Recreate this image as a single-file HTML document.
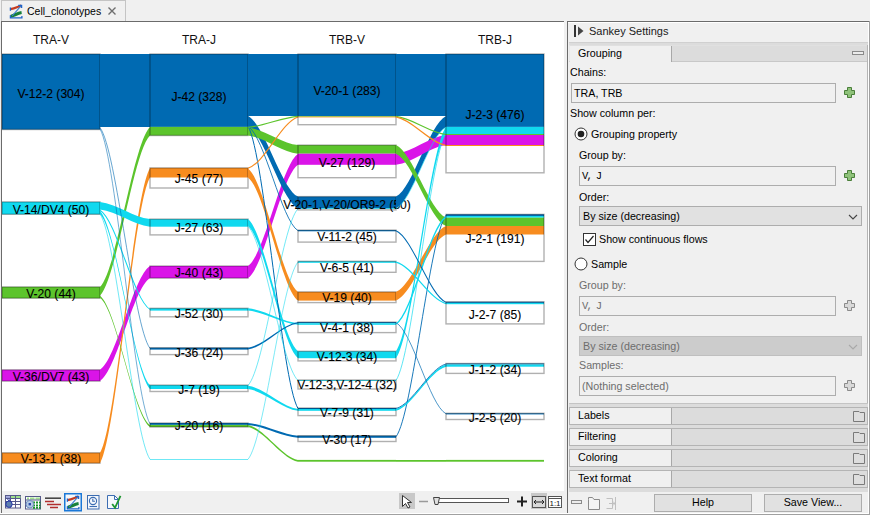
<!DOCTYPE html>
<html><head><meta charset="utf-8">
<style>
*{margin:0;padding:0;box-sizing:border-box}
html,body{width:870px;height:515px;overflow:hidden;background:#f0f0f0;font-family:"Liberation Sans",sans-serif;color:#000}
.abs{position:absolute}
.t{position:absolute;font-size:10.7px;white-space:nowrap;line-height:13px}
.field{position:absolute;background:#f0f0f0;border:1px solid #adadad}
.hdr{position:absolute;left:569px;width:299px;height:18px;background:#dcdcdc;border:1px solid #b4b4b4}
.hdr .tab{position:absolute;left:0;top:0;width:102px;height:16px;background:#f0f0f0;border-right:1px solid #a8a8a8}
.hdr .lab{position:absolute;left:8px;top:1px;font-size:10.7px;line-height:13px}
.gap{position:absolute;left:569px;width:299px;height:4px;background:#dcdcdc}
.fold{position:absolute;left:283px;top:3px;width:12px;height:11px}
.plus{position:absolute;width:11px;height:11px}
.btn{position:absolute;background:#e1e1e1;border:1px solid #adadad;font-size:10.7px;text-align:center;line-height:15px}
</style></head><body>
<!-- tab bar -->
<div class="abs" style="left:0;top:0;width:870px;height:21px;background:#f0f0f0"></div>
<div class="abs" style="left:1px;top:0px;width:125px;height:22px;background:#f0f0f0;border:1px solid #c4c4c4;border-bottom:none"></div>
<svg class="abs" style="left:9px;top:4px" width="15" height="15" viewBox="0 0 15 15">
 <path d="M1.5 5.2 C5 4.8 8.5 3 12.3 1.6" stroke="#c43c22" stroke-width="2.2" fill="none"/>
 <path d="M1.6 12.4 C5 11.6 8.5 9.2 12.6 8.6" stroke="#17803a" stroke-width="3" fill="none"/>
 <path d="M11.8 2.2 L3.2 11.8" stroke="#3b7fd0" stroke-width="1.1" fill="none"/>
 <path d="M1.4 3.6 V6.8 M1.4 11.2 V13.9 H12.9 V12 M9.2 1.3 H12.6 V4" stroke="#1f63c8" stroke-width="1.3" fill="none"/>
</svg>
<div class="t" style="left:27px;top:5px;font-size:10.5px;color:#000">Cell_clonotypes</div>
<svg class="abs" style="left:107px;top:6px" width="10" height="10" viewBox="0 0 10 10"><path d="M1.5 1.5L8.5 8.5M8.5 1.5L1.5 8.5" stroke="#6e6e6e" stroke-width="1.4"/></svg>

<!-- left panel -->

<svg width="564" height="470" viewBox="0 21 564 470" style="position:absolute;left:0;top:21px">
<rect x="0" y="21" width="2" height="470" fill="#f0f0f0"/><rect x="2" y="22" width="562" height="469" fill="#fff"/>
<g font-family="Liberation Sans, sans-serif"><rect x="2" y="54" width="98" height="75.50" fill="#006ab2"/><rect x="2" y="54" width="98" height="75.50" fill="none" stroke="rgba(0,0,0,0.31)" stroke-width="1.4"/><rect x="2" y="201.9" width="98" height="12.40" fill="#10d9ef"/><rect x="2" y="201.9" width="98" height="12.40" fill="none" stroke="rgba(0,0,0,0.31)" stroke-width="1.4"/><rect x="2" y="286.9" width="98" height="11.30" fill="#5cc42c"/><rect x="2" y="286.9" width="98" height="11.30" fill="none" stroke="rgba(0,0,0,0.31)" stroke-width="1.4"/><rect x="2" y="369.8" width="98" height="11.30" fill="#da14e8"/><rect x="2" y="369.8" width="98" height="11.30" fill="none" stroke="rgba(0,0,0,0.31)" stroke-width="1.4"/><rect x="2" y="452.8" width="98" height="10.40" fill="#f78c1f"/><rect x="2" y="452.8" width="98" height="10.40" fill="none" stroke="rgba(0,0,0,0.31)" stroke-width="1.4"/><text x="51.0" y="98.0" text-anchor="middle" font-size="12.1" fill="#000" stroke="#000" stroke-width="0.1">V-12-2 (304)</text><text x="51.0" y="213.9" text-anchor="middle" font-size="12.1" fill="#000" stroke="#000" stroke-width="0.1">V-14/DV4 (50)</text><text x="51.0" y="297.7" text-anchor="middle" font-size="12.1" fill="#000" stroke="#000" stroke-width="0.1">V-20 (44)</text><text x="51.0" y="380.6" text-anchor="middle" font-size="12.1" fill="#000" stroke="#000" stroke-width="0.1">V-36/DV7 (43)</text><text x="51.0" y="462.7" text-anchor="middle" font-size="12.1" fill="#000" stroke="#000" stroke-width="0.1">V-13-1 (38)</text><path d="M100 54C116.67 54.00 133.33 54.00 150 54L150 126.9C133.33 126.90 116.67 126.90 100 126.9Z" fill="#006ab2" opacity="1"/><path d="M100 369.8C116.67 359.42 133.33 276.38 150 266L150 278.1C133.33 288.40 116.67 370.80 100 381.1Z" fill="#da14e8" opacity="1"/><path d="M100 452.8C116.67 424.31 133.33 196.39 150 167.9L150 177.5C133.33 206.07 116.67 434.63 100 463.2Z" fill="#f78c1f" opacity="1"/><path d="M100 286.9C116.67 270.90 133.33 142.90 150 126.9L150 135.5C133.33 151.51 116.67 279.59 100 295.6Z" fill="#5cc42c" opacity="1"/><path d="M100 201.9C116.67 203.62 133.33 217.38 150 219.1L150 226.7C133.33 224.99 116.67 211.31 100 209.6Z" fill="#10d9ef" opacity="1"/><path d="M100 211.0C116.67 228.41 133.33 367.69 150 385.1L150 389C133.33 371.50 116.67 231.50 100 214.0Z" fill="#10d9ef" opacity="1"/><path d="M100 295.8C116.67 308.71 133.33 411.99 150 424.9L150 427C133.33 414.08 116.67 310.72 100 297.8Z" fill="#5cc42c" opacity="1"/><path d="M100 210.2C116.67 220.12 133.33 299.48 150 309.4" fill="none" stroke="#10d9ef" stroke-width="1.02"/><path d="M100 127.6C116.67 149.68 133.33 326.28 150 348.35" fill="none" stroke="#006ab2" stroke-width="0.60"/><path d="M100 213.95C116.67 238.48 133.33 434.76 150 459.3" fill="none" stroke="#10d9ef" stroke-width="0.60"/><path d="M100 128.89999999999998C116.67 158.39 133.33 394.36 150 423.85" fill="none" stroke="#006ab2" stroke-width="0.55"/><rect x="150" y="54" width="98" height="72.90" fill="#006ab2"/><rect x="150" y="126.9" width="98" height="8.60" fill="#5cc42c"/><rect x="150" y="54" width="98" height="81.50" fill="none" stroke="rgba(0,0,0,0.31)" stroke-width="1.4"/><rect x="150" y="167.9" width="98" height="9.60" fill="#f78c1f"/><rect x="150" y="167.9" width="98" height="20.10" fill="none" stroke="rgba(0,0,0,0.31)" stroke-width="1.4"/><rect x="150" y="219.1" width="98" height="7.60" fill="#10d9ef"/><rect x="150" y="219.1" width="98" height="15.80" fill="none" stroke="rgba(0,0,0,0.31)" stroke-width="1.4"/><rect x="150" y="266" width="98" height="12.10" fill="#da14e8"/><rect x="150" y="266" width="98" height="12.10" fill="none" stroke="rgba(0,0,0,0.31)" stroke-width="1.4"/><rect x="150" y="308.3" width="98" height="2.30" fill="#10d9ef"/><rect x="150" y="308.3" width="98" height="8.50" fill="none" stroke="rgba(0,0,0,0.31)" stroke-width="1.4"/><rect x="150" y="347.7" width="98" height="1.90" fill="#006ab2"/><rect x="150" y="347.7" width="98" height="6.90" fill="none" stroke="rgba(0,0,0,0.31)" stroke-width="1.4"/><rect x="150" y="385.1" width="98" height="3.90" fill="#10d9ef"/><rect x="150" y="385.1" width="98" height="6.40" fill="none" stroke="rgba(0,0,0,0.31)" stroke-width="1.4"/><rect x="150" y="423" width="98" height="1.90" fill="#006ab2"/><rect x="150" y="424.9" width="98" height="2.10" fill="#5cc42c"/><rect x="150" y="423" width="98" height="4.00" fill="none" stroke="rgba(0,0,0,0.31)" stroke-width="1.4"/><text x="199.0" y="100.8" text-anchor="middle" font-size="12.1" fill="#000" stroke="#000" stroke-width="0.1">J-42 (328)</text><text x="199.0" y="182.8" text-anchor="middle" font-size="12.1" fill="#000" stroke="#000" stroke-width="0.1">J-45 (77)</text><text x="199.0" y="231.8" text-anchor="middle" font-size="12.1" fill="#000" stroke="#000" stroke-width="0.1">J-27 (63)</text><text x="199.0" y="276.9" text-anchor="middle" font-size="12.1" fill="#000" stroke="#000" stroke-width="0.1">J-40 (43)</text><text x="199.0" y="317.7" text-anchor="middle" font-size="12.1" fill="#000" stroke="#000" stroke-width="0.1">J-52 (30)</text><text x="199.0" y="356.7" text-anchor="middle" font-size="12.1" fill="#000" stroke="#000" stroke-width="0.1">J-36 (24)</text><text x="199.0" y="393.6" text-anchor="middle" font-size="12.1" fill="#000" stroke="#000" stroke-width="0.1">J-7 (19)</text><text x="199.0" y="429.7" text-anchor="middle" font-size="12.1" fill="#000" stroke="#000" stroke-width="0.1">J-20 (16)</text><rect x="150" y="459" width="98" height="0.6000000000000227" fill="#10d9ef"/><path d="M248 54C264.67 54.00 281.33 54.00 298 54L298 116C281.33 116.00 264.67 116.00 248 116Z" fill="#006ab2" opacity="1"/><path d="M248 266C264.67 254.77 281.33 164.93 298 153.7L298 164.8C281.33 176.13 264.67 266.77 248 278.1Z" fill="#da14e8" opacity="1"/><path d="M248 116C264.67 124.06 281.33 188.54 298 196.6L298 208.3C281.33 200.12 264.67 134.68 248 126.5Z" fill="#006ab2" opacity="1"/><path d="M248 168.6C264.67 180.93 281.33 279.57 298 291.9L298 300.6C281.33 288.29 264.67 189.81 248 177.5Z" fill="#f78c1f" opacity="1"/><path d="M248 127.6C264.67 129.35 281.33 143.35 298 145.1L298 153.7C281.33 151.88 264.67 137.32 248 135.5Z" fill="#5cc42c" opacity="1"/><path d="M248 219.1C264.67 232.32 281.33 338.08 298 351.3L298 358.2C281.33 344.98 264.67 239.22 248 226.0Z" fill="#10d9ef" opacity="1"/><path d="M248 385.8C264.67 388.12 281.33 406.68 298 409L298 410.8C281.33 408.62 264.67 391.18 248 389Z" fill="#10d9ef" opacity="1"/><path d="M248 308.3C264.67 309.79 281.33 321.71 298 323.2L298 324.8C281.33 323.38 264.67 312.02 248 310.6Z" fill="#10d9ef" opacity="1"/><path d="M248 424.9C264.67 428.40 281.33 456.40 298 459.9L298 461.7C281.33 458.23 264.67 430.47 248 427Z" fill="#5cc42c" opacity="1"/><path d="M248 347.7C264.67 345.14 281.33 324.66 298 322.1L298 323.2C281.33 325.84 264.67 346.96 248 349.6Z" fill="#006ab2" opacity="1"/><path d="M248 423C264.67 424.27 281.33 434.43 298 435.7L298 437.8C281.33 436.51 264.67 426.19 248 424.9Z" fill="#006ab2" opacity="1"/><path d="M248 126.3C264.67 136.74 281.33 220.26 298 230.7" fill="none" stroke="#006ab2" stroke-width="0.85"/><path d="M248 126.3C264.67 154.52 281.33 380.28 298 408.5" fill="none" stroke="#006ab2" stroke-width="1.00"/><path d="M248 127.25C264.67 126.16 281.33 117.44 298 116.35" fill="none" stroke="#5cc42c" stroke-width="1.10"/><path d="M248 168.25C264.67 163.13 281.33 122.17 298 117.05000000000001" fill="none" stroke="#f78c1f" stroke-width="1.10"/><path d="M248 226.35C264.67 241.75 281.33 365.00 298 380.4" fill="none" stroke="#10d9ef" stroke-width="0.59"/><path d="M248 385.45000000000005C264.67 367.77 281.33 226.33 298 208.65" fill="none" stroke="#10d9ef" stroke-width="0.59"/><path d="M248 459.3C264.67 439.57 281.33 281.77 298 262.05" fill="none" stroke="#10d9ef" stroke-width="0.55"/><rect x="298" y="54" width="98" height="62.00" fill="#006ab2"/><rect x="298" y="116" width="98" height="0.70" fill="#5cc42c"/><rect x="298" y="116.7" width="98" height="0.70" fill="#f78c1f"/><rect x="298" y="54" width="98" height="70.70" fill="none" stroke="rgba(0,0,0,0.31)" stroke-width="1.4"/><rect x="298" y="145.1" width="98" height="8.60" fill="#5cc42c"/><rect x="298" y="153.7" width="98" height="11.10" fill="#da14e8"/><rect x="298" y="145.1" width="98" height="32.60" fill="none" stroke="rgba(0,0,0,0.31)" stroke-width="1.4"/><rect x="298" y="196.6" width="98" height="11.70" fill="#006ab2"/><rect x="298" y="208.3" width="98" height="0.70" fill="#10d9ef"/><rect x="298" y="196.6" width="98" height="13.30" fill="none" stroke="rgba(0,0,0,0.31)" stroke-width="1.4"/><rect x="298" y="230.1" width="98" height="1.20" fill="#006ab2"/><rect x="298" y="230.1" width="98" height="12.00" fill="none" stroke="rgba(0,0,0,0.31)" stroke-width="1.4"/><rect x="298" y="261.3" width="98" height="1.50" fill="#10d9ef"/><rect x="298" y="261.3" width="98" height="11.00" fill="none" stroke="rgba(0,0,0,0.31)" stroke-width="1.4"/><rect x="298" y="291.9" width="98" height="8.70" fill="#f78c1f"/><rect x="298" y="291.9" width="98" height="10.70" fill="none" stroke="rgba(0,0,0,0.31)" stroke-width="1.4"/><rect x="298" y="322.1" width="98" height="1.10" fill="#006ab2"/><rect x="298" y="323.2" width="98" height="1.60" fill="#10d9ef"/><rect x="298" y="322.1" width="98" height="10.50" fill="none" stroke="rgba(0,0,0,0.31)" stroke-width="1.4"/><rect x="298" y="351.3" width="98" height="6.90" fill="#10d9ef"/><rect x="298" y="351.3" width="98" height="9.60" fill="none" stroke="rgba(0,0,0,0.31)" stroke-width="1.4"/><rect x="298" y="380" width="98" height="0.80" fill="#10d9ef"/><rect x="298" y="380" width="98" height="9.00" fill="none" stroke="rgba(0,0,0,0.31)" stroke-width="1.4"/><rect x="298" y="408" width="98" height="1.00" fill="#006ab2"/><rect x="298" y="409" width="98" height="1.80" fill="#10d9ef"/><rect x="298" y="408" width="98" height="7.60" fill="none" stroke="rgba(0,0,0,0.31)" stroke-width="1.4"/><rect x="298" y="435.7" width="98" height="2.10" fill="#006ab2"/><rect x="298" y="435.7" width="98" height="5.80" fill="none" stroke="rgba(0,0,0,0.31)" stroke-width="1.4"/><text x="347.0" y="94.8" text-anchor="middle" font-size="12.1" fill="#000" stroke="#000" stroke-width="0.1">V-20-1 (283)</text><text x="347.0" y="166.5" text-anchor="middle" font-size="12.1" fill="#000" stroke="#000" stroke-width="0.1">V-27 (129)</text><text x="347.0" y="208.6" text-anchor="middle" font-size="12.1" fill="#000" stroke="#000" stroke-width="0.1">V-20-1,V-20/OR9-2 (50)</text><text x="347.0" y="240.8" text-anchor="middle" font-size="12.1" fill="#000" stroke="#000" stroke-width="0.1">V-11-2 (45)</text><text x="347.0" y="271.7" text-anchor="middle" font-size="12.1" fill="#000" stroke="#000" stroke-width="0.1">V-6-5 (41)</text><text x="347.0" y="301.6" text-anchor="middle" font-size="12.1" fill="#000" stroke="#000" stroke-width="0.1">V-19 (40)</text><text x="347.0" y="331.7" text-anchor="middle" font-size="12.1" fill="#000" stroke="#000" stroke-width="0.1">V-4-1 (38)</text><text x="347.0" y="360.5" text-anchor="middle" font-size="12.1" fill="#000" stroke="#000" stroke-width="0.1">V-12-3 (34)</text><text x="347.0" y="389.4" text-anchor="middle" font-size="12.1" fill="#000" stroke="#000" stroke-width="0.1">V-12-3,V-12-4 (32)</text><text x="347.0" y="417.4" text-anchor="middle" font-size="12.1" fill="#000" stroke="#000" stroke-width="0.1">V-7-9 (31)</text><text x="347.0" y="443.6" text-anchor="middle" font-size="12.1" fill="#000" stroke="#000" stroke-width="0.1">V-30 (17)</text><rect x="298" y="459.9" width="98" height="1.8000000000000114" fill="#5cc42c"/><path d="M396 54C412.67 54.00 429.33 54.00 446 54L446 116C429.33 116.00 412.67 116.00 396 116Z" fill="#006ab2" opacity="1"/><path d="M396 196.6C412.67 188.54 429.33 124.06 446 116L446 126.9C429.33 135.04 412.67 200.16 396 208.3Z" fill="#006ab2" opacity="1"/><path d="M396 153.7C412.67 151.83 429.33 136.87 446 135L446 145C429.33 146.98 412.67 162.82 396 164.8Z" fill="#da14e8" opacity="1"/><path d="M396 291.9C412.67 285.31 429.33 232.59 446 226L446 234.6C429.33 241.20 412.67 294.00 396 300.6Z" fill="#f78c1f" opacity="1"/><path d="M396 145.1C412.67 152.36 429.33 210.44 446 217.7L446 226C429.33 218.77 412.67 160.93 396 153.7Z" fill="#5cc42c" opacity="1"/><path d="M396 351.3C412.67 328.85 429.33 149.25 446 126.8L446 133.4C429.33 155.88 412.67 335.72 396 358.2Z" fill="#10d9ef" opacity="1"/><path d="M396 436.75C412.67 414.59 429.33 237.31 446 215.15" fill="none" stroke="#006ab2" stroke-width="0.90"/><path d="M396 409C412.67 404.55 429.33 368.95 446 364.5L446 366.7C429.33 371.11 412.67 406.39 396 410.8Z" fill="#10d9ef" opacity="1"/><path d="M396 459.9C412.67 459.90 429.33 459.90 446 459.9L446 461.7C429.33 461.70 412.67 461.70 396 461.7Z" fill="#5cc42c" opacity="1"/><path d="M396 324.0C412.67 313.29 429.33 227.56 446 216.85" fill="none" stroke="#10d9ef" stroke-width="1.36"/><path d="M396 262.05C412.67 266.20 429.33 299.40 446 303.54999999999995" fill="none" stroke="#10d9ef" stroke-width="1.27"/><path d="M396 230.7C412.67 237.86 429.33 295.19 446 302.35" fill="none" stroke="#006ab2" stroke-width="1.02"/><path d="M396 322.65C412.67 331.76 429.33 404.69 446 413.8" fill="none" stroke="#006ab2" stroke-width="0.70"/><path d="M396 408.5C412.67 404.05 429.33 368.45 446 364.0" fill="none" stroke="#006ab2" stroke-width="0.85"/><path d="M396 380.4C412.67 355.72 429.33 158.28 446 133.6" fill="none" stroke="#10d9ef" stroke-width="0.68"/><path d="M396 116.35C412.67 118.16 429.33 132.69 446 134.5" fill="none" stroke="#5cc42c" stroke-width="1.10"/><path d="M396 117.05000000000001C412.67 119.90 429.33 142.66 446 145.5" fill="none" stroke="#f78c1f" stroke-width="1.10"/><path d="M396 208.65C412.67 200.50 429.33 135.30 446 127.15" fill="none" stroke="#10d9ef" stroke-width="0.59"/><rect x="446" y="54" width="98" height="72.90" fill="#006ab2"/><rect x="446" y="126.9" width="98" height="7.10" fill="#10d9ef"/><rect x="446" y="134" width="98" height="1.00" fill="#5cc42c"/><rect x="446" y="135" width="98" height="10.00" fill="#da14e8"/><rect x="446" y="145" width="98" height="1.00" fill="#f78c1f"/><rect x="446" y="54" width="98" height="118.80" fill="none" stroke="rgba(0,0,0,0.31)" stroke-width="1.4"/><rect x="446" y="214.3" width="98" height="1.70" fill="#006ab2"/><rect x="446" y="216" width="98" height="1.70" fill="#10d9ef"/><rect x="446" y="217.7" width="98" height="8.30" fill="#5cc42c"/><rect x="446" y="226" width="98" height="8.50" fill="#f78c1f"/><rect x="446" y="214.4" width="98" height="47.00" fill="none" stroke="rgba(0,0,0,0.31)" stroke-width="1.4"/><rect x="446" y="301.8" width="98" height="1.10" fill="#006ab2"/><rect x="446" y="302.9" width="98" height="1.30" fill="#10d9ef"/><rect x="446" y="301.8" width="98" height="22.10" fill="none" stroke="rgba(0,0,0,0.31)" stroke-width="1.4"/><rect x="446" y="363.5" width="98" height="1.00" fill="#006ab2"/><rect x="446" y="364.5" width="98" height="2.20" fill="#10d9ef"/><rect x="446" y="363.5" width="98" height="9.90" fill="none" stroke="rgba(0,0,0,0.31)" stroke-width="1.4"/><rect x="446" y="413.3" width="98" height="1.10" fill="#006ab2"/><rect x="446" y="413.3" width="98" height="6.20" fill="none" stroke="rgba(0,0,0,0.31)" stroke-width="1.4"/><text x="495.0" y="118.7" text-anchor="middle" font-size="12.1" fill="#000" stroke="#000" stroke-width="0.1">J-2-3 (476)</text><text x="495.0" y="242.7" text-anchor="middle" font-size="12.1" fill="#000" stroke="#000" stroke-width="0.1">J-2-1 (191)</text><text x="495.0" y="318.7" text-anchor="middle" font-size="12.1" fill="#000" stroke="#000" stroke-width="0.1">J-2-7 (85)</text><text x="495.0" y="373.6" text-anchor="middle" font-size="12.1" fill="#000" stroke="#000" stroke-width="0.1">J-1-2 (34)</text><text x="495.0" y="421.6" text-anchor="middle" font-size="12.1" fill="#000" stroke="#000" stroke-width="0.1">J-2-5 (20)</text><rect x="446" y="459.9" width="98" height="1.8000000000000114" fill="#5cc42c"/></g>
<g font-family="Liberation Sans, sans-serif" font-size="12" fill="#111"><text x="51.0" y="43.6" font-size="12" text-anchor="middle">TRA-V</text><text x="199.0" y="43.6" font-size="12" text-anchor="middle">TRA-J</text><text x="347.0" y="43.6" font-size="12" text-anchor="middle">TRB-V</text><text x="495.0" y="43.6" font-size="12" text-anchor="middle">TRB-J</text></g>
</svg>
<div class="abs" style="left:1px;top:21px;width:563px;height:1px;background:#6b6b6b"></div>
<div class="abs" style="left:567px;top:21px;width:302px;height:1px;background:#6b6b6b"></div>
<div class="abs" style="left:568px;top:22px;width:300px;height:1px;background:#fff"></div>
<div class="abs" style="left:1px;top:21px;width:1px;height:492px;background:#6b6b6b"></div>
<div class="abs" style="left:564px;top:21px;width:3px;height:492px;background:#f0f0f0"></div>
<div class="abs" style="left:567px;top:21px;width:1px;height:492px;background:#6b6b6b"></div>
<!-- bottom toolbar -->
<div class="abs" style="left:2px;top:491px;width:565px;height:22px;background:#f0f0f0"></div>
<div class="abs" style="left:0;top:513px;width:870px;height:1px;background:#fff"></div>
<div class="abs" style="left:0;top:514px;width:870px;height:1px;background:#a0a0a0"></div>
<svg class="abs" style="left:0;top:491px" width="567" height="22" viewBox="0 0 567 22">
 <g transform="translate(5,4)">
  <rect x="0.5" y="0.5" width="15" height="12.5" fill="#fff" stroke="#56598a"/>
  <rect x="6" y="1" width="4" height="2.5" fill="#9fe08c"/><rect x="11" y="1" width="4.5" height="2.5" fill="#9fe08c"/>
  <path d="M5.5 1V13M10.5 1V13M1 3.5H15.5M1 6.5H15.5M1 9.5H15.5" stroke="#56598a" stroke-width="1"/>
  <path d="M2 1.2V3.2M4 1.2V3.2M2.5 4L4 6L5 4.2" stroke="#2a3aa8" stroke-width="1" fill="none"/>
  <circle cx="4" cy="9.2" r="3.2" fill="#5f7fae" stroke="#2636a8" stroke-width="1"/>
 </g>
 <g transform="translate(25,5)">
  <rect x="0.5" y="0.5" width="15" height="12.5" fill="#fff" stroke="#56598a"/>
  <rect x="2" y="1.5" width="2" height="2" fill="#9fe08c"/><rect x="5" y="1.5" width="4.5" height="2" fill="#9fe08c"/><rect x="10.5" y="1.5" width="4.5" height="2" fill="#9fe08c"/>
  <path d="M1 4H15.5" stroke="#56598a"/>
  <path d="M8 5.5h2v2h-2zM11 5.5h2v2h-2zM14 5.5h1.5v2h-1.5zM8 8.5h2v2h-2zM11 8.5h2v2h-2zM14 8.5h1.5v2h-1.5zM8 11h2v1.8h-2zM11 11h2v1.8h-2zM14 11h1.5v1.8h-1.5z" fill="#17932a"/>
  <circle cx="4.8" cy="8.2" r="3.8" fill="#b4c8e4" stroke="#6f8fc0" stroke-width="1"/>
  <rect x="3.6" y="7" width="2.4" height="2.4" fill="#2a4aa8"/>
 </g>
 <g transform="translate(45,6)">
  <path d="M0 1.2H16" stroke="#454545" stroke-width="1.6"/>
  <path d="M0 4.5H9M2 7.5H16M5 10.5H13" stroke="#b12e2e" stroke-width="1.6"/>
 </g>
 <rect x="64.75" y="2.75" width="16.5" height="17" fill="#f3f7fb" stroke="#1a78d8" stroke-width="1.5"/>
 <g transform="translate(66,4)">
  <path d="M1.5 5.2 C5 4.8 8.5 3 12.3 1.6" stroke="#c43c22" stroke-width="2.2" fill="none"/>
  <path d="M1.6 12.4 C5 11.6 8.5 9.2 12.6 8.6" stroke="#17803a" stroke-width="3" fill="none"/>
  <path d="M11.8 2.2 L3.2 11.8" stroke="#3b7fd0" stroke-width="1.1" fill="none"/>
  <path d="M1.4 3.6 V6.8 M1.4 11.2 V13.9 H12.9 V12 M9.2 1.3 H12.6 V4" stroke="#1f63c8" stroke-width="1.3" fill="none"/>
 </g>
 <g transform="translate(87,4)">
  <rect x="0.5" y="0.5" width="11.5" height="13.5" fill="#f5f8fc" stroke="#3c6db2"/>
  <circle cx="6" cy="6" r="3.6" fill="none" stroke="#3c6db2" stroke-width="1.1"/>
  <path d="M5.8 3.8V6.3H8" stroke="#3c6db2" stroke-width="1.1" fill="none"/>
  <path d="M2.5 11.5H10" stroke="#3c6db2" stroke-width="1.1"/>
 </g>
 <g transform="translate(107,4)">
  <path d="M0.5 0.5H7.5L11.5 4.5V13.5H0.5Z" fill="#f5f8fc" stroke="#3c6db2"/>
  <path d="M7.5 0.5V4.5H11.5" fill="none" stroke="#3c6db2"/>
  <path d="M5.2 9L8 12.8L13.5 0.8" stroke="#1e9630" stroke-width="1.8" fill="none"/>
 </g>
 <!-- right tools -->
 <rect x="399" y="2" width="16" height="16" fill="#c8c8c8"/>
 <path d="M402.5 4.5V15.5L405.5 12.5L408 17L410 16L407.5 11.5H411.5Z" fill="#fff" stroke="#333" stroke-width="1"/>
 <path d="M419 10.5H428" stroke="#9a9a9a" stroke-width="1.5"/>
 <rect x="437.5" y="7.5" width="71" height="4" fill="#fff" stroke="#555"/>
 <path d="M433.5 6.5H439.5L438 13.5H435Z" fill="#e0e0e0" stroke="#444"/>
 <path d="M517 10.5H527M522 5.5V15.5" stroke="#222" stroke-width="2"/>
 <rect x="531" y="2" width="16" height="16" fill="#c8c8c8"/>
 <rect x="532.5" y="5.5" width="13" height="11" fill="#d9d9d9" stroke="#555"/>
 <path d="M534 11H544M534 11L536 9M534 11L536 13M544 11L542 9M544 11L542 13" stroke="#222" stroke-width="1" stroke-dasharray="none"/>
 <rect x="548.5" y="5.5" width="13" height="11" fill="#fff" stroke="#555"/>
 <path d="M548.5 7.5H561.5" stroke="#555"/>
 <text x="555" y="15" font-size="8" text-anchor="middle" font-family="Liberation Sans" fill="#111">1:1</text>
</svg>
<!-- right panel -->
<div class="abs" style="left:868px;top:22px;width:1px;height:492px;background:#fff"></div>
<div class="abs" style="left:869px;top:21px;width:1px;height:494px;background:#a0a0a0"></div>
<svg class="abs" style="left:573px;top:25px" width="12" height="13" viewBox="0 0 12 13"><rect x="1" y="0" width="2" height="12" fill="#333"/><path d="M5 1.5L10.5 6L5 10.5Z" fill="#444"/></svg>
<div class="t" style="left:589px;top:25px;font-size:11px;color:#1a1a1a">Sankey Settings</div>
<div class="gap" style="top:42px;height:4px;border-top:1px solid #d0d0d0"></div>
<div class="hdr" style="top:45px;height:17px;border-color:#e0e0e0 #d0d0d0 #c8c8c8 #e8e8e8"><div class="tab"></div><div class="lab">Grouping</div>
 <div class="abs" style="right:3px;top:5px;width:12px;height:4px;border:1px solid #8a8a8a;background:#ececec"></div></div>
<div class="t" style="left:570px;top:66px">Chains:</div>
<div class="field" style="left:571px;top:83px;width:265px;height:20px"></div>
<div class="t" style="left:574px;top:87px">TRA, TRB</div>
<svg class="plus" style="left:844px;top:87px" viewBox="0 0 11 11"><path d="M3.5 0.5H7.5V3.5H10.5V7.5H7.5V10.5H3.5V7.5H0.5V3.5H3.5Z" fill="#8fc27a" stroke="#4a7f3a"/></svg>
<div class="t" style="left:570px;top:107px">Show column per:</div>
<svg class="abs" style="left:574px;top:127px" width="14" height="14" viewBox="0 0 14 14"><circle cx="7" cy="7" r="6" fill="#fff" stroke="#333"/><circle cx="7" cy="7" r="3.3" fill="#222"/></svg>
<div class="t" style="left:591px;top:128px">Grouping property</div>
<div class="t" style="left:579px;top:149px">Group by:</div>
<div class="field" style="left:579px;top:166px;width:257px;height:20px"></div>
<div class="t" style="left:582px;top:170px;font-family:'Liberation Mono',monospace;font-size:10.5px;letter-spacing:-1.7px">V, J</div>
<svg class="plus" style="left:844px;top:170px" viewBox="0 0 11 11"><path d="M3.5 0.5H7.5V3.5H10.5V7.5H7.5V10.5H3.5V7.5H0.5V3.5H3.5Z" fill="#8fc27a" stroke="#4a7f3a"/></svg>
<div class="t" style="left:579px;top:191px">Order:</div>
<div class="field" style="left:579px;top:206px;width:283px;height:20px;background:#e1e1e1"></div>
<div class="t" style="left:583px;top:210px">By size (decreasing)</div>
<svg class="abs" style="left:848px;top:214px" width="10" height="7" viewBox="0 0 10 7"><path d="M1 1L5 5L9 1" stroke="#444" stroke-width="1.1" fill="none"/></svg>
<svg class="abs" style="left:583px;top:233px" width="13" height="13" viewBox="0 0 13 13"><rect x="0.5" y="0.5" width="12" height="12" fill="#fff" stroke="#333"/><path d="M2.5 6.5L5 9.5L10.5 3" stroke="#222" stroke-width="1.2" fill="none"/></svg>
<div class="t" style="left:599px;top:233px">Show continuous flows</div>
<svg class="abs" style="left:574px;top:257px" width="14" height="14" viewBox="0 0 14 14"><circle cx="7" cy="7" r="6" fill="#fff" stroke="#333"/></svg>
<div class="t" style="left:591px;top:258px">Sample</div>
<div class="t" style="left:579px;top:279px;color:#6d6d6d">Group by:</div>
<div class="field" style="left:579px;top:296px;width:257px;height:20px"></div>
<div class="t" style="left:582px;top:300px;font-family:'Liberation Mono',monospace;font-size:10.5px;letter-spacing:-1.7px;color:#6d6d6d">V, J</div>
<svg class="plus" style="left:844px;top:300px" viewBox="0 0 11 11"><path d="M3.5 0.5H7.5V3.5H10.5V7.5H7.5V10.5H3.5V7.5H0.5V3.5H3.5Z" fill="#d8d8d8" stroke="#8a8a8a"/></svg>
<div class="t" style="left:579px;top:321px;color:#6d6d6d">Order:</div>
<div class="field" style="left:579px;top:336px;width:283px;height:20px;background:#cccccc;border-color:#bfbfbf"></div>
<div class="t" style="left:583px;top:340px;color:#6d6d6d">By size (decreasing)</div>
<svg class="abs" style="left:848px;top:344px" width="10" height="7" viewBox="0 0 10 7"><path d="M1 1L5 5L9 1" stroke="#a8a8a8" stroke-width="1.1" fill="none"/></svg>
<div class="t" style="left:579px;top:359px;color:#6d6d6d">Samples:</div>
<div class="field" style="left:579px;top:376px;width:257px;height:20px"></div>
<div class="t" style="left:582px;top:380px;color:#6d6d6d">(Nothing selected)</div>
<svg class="plus" style="left:844px;top:380px" viewBox="0 0 11 11"><path d="M3.5 0.5H7.5V3.5H10.5V7.5H7.5V10.5H3.5V7.5H0.5V3.5H3.5Z" fill="#d8d8d8" stroke="#8a8a8a"/></svg>
<div class="abs" style="left:867px;top:45px;width:1px;height:358px;background:#b4b4b4"></div>
<div class="gap" style="top:403px;border-top:1px solid #c4c4c4"></div>
<div class="hdr" style="top:407px"><div class="tab"></div><div class="lab">Labels</div><svg class="fold" viewBox="0 0 12 11"><path d="M0.5 0.5H6L7 1.5H11.5V10.5H0.5Z" fill="#dedede" stroke="#7a7a7a"/></svg></div>
<div class="gap" style="top:425px;height:3px"></div>
<div class="hdr" style="top:428px"><div class="tab"></div><div class="lab">Filtering</div><svg class="fold" viewBox="0 0 12 11"><path d="M0.5 0.5H6L7 1.5H11.5V10.5H0.5Z" fill="#dedede" stroke="#7a7a7a"/></svg></div>
<div class="gap" style="top:446px;height:3px"></div>
<div class="hdr" style="top:449px"><div class="tab"></div><div class="lab">Coloring</div><svg class="fold" viewBox="0 0 12 11"><path d="M0.5 0.5H6L7 1.5H11.5V10.5H0.5Z" fill="#dedede" stroke="#7a7a7a"/></svg></div>
<div class="gap" style="top:467px;height:3px"></div>
<div class="hdr" style="top:470px"><div class="tab"></div><div class="lab">Text format</div><svg class="fold" viewBox="0 0 12 11"><path d="M0.5 0.5H6L7 1.5H11.5V10.5H0.5Z" fill="#dedede" stroke="#7a7a7a"/></svg></div>
<div class="gap" style="top:488px;height:4px"></div>
<svg class="abs" style="left:569px;top:492px" width="60" height="21" viewBox="0 0 60 21">
 <rect x="2.5" y="8.5" width="10" height="3" fill="#ececec" stroke="#8a8a8a"/>
 <path d="M19.5 7.5V17.5H30.5V7.5H25L23.5 5.5H19.5Z" fill="#f4f4f4" stroke="#8a8a8a"/>
 <path d="M37.5 6.5H43.5V16.5H37.5M40 11.5H46M44 9.5L46 11.5L44 13.5M46.5 5V18" stroke="#c0c0c0" fill="none"/>
</svg>
<div class="btn" style="left:654px;top:494px;width:98px;height:18px">Help</div>
<div class="btn" style="left:764px;top:494px;width:98px;height:18px">Save View...</div>
</body></html>
